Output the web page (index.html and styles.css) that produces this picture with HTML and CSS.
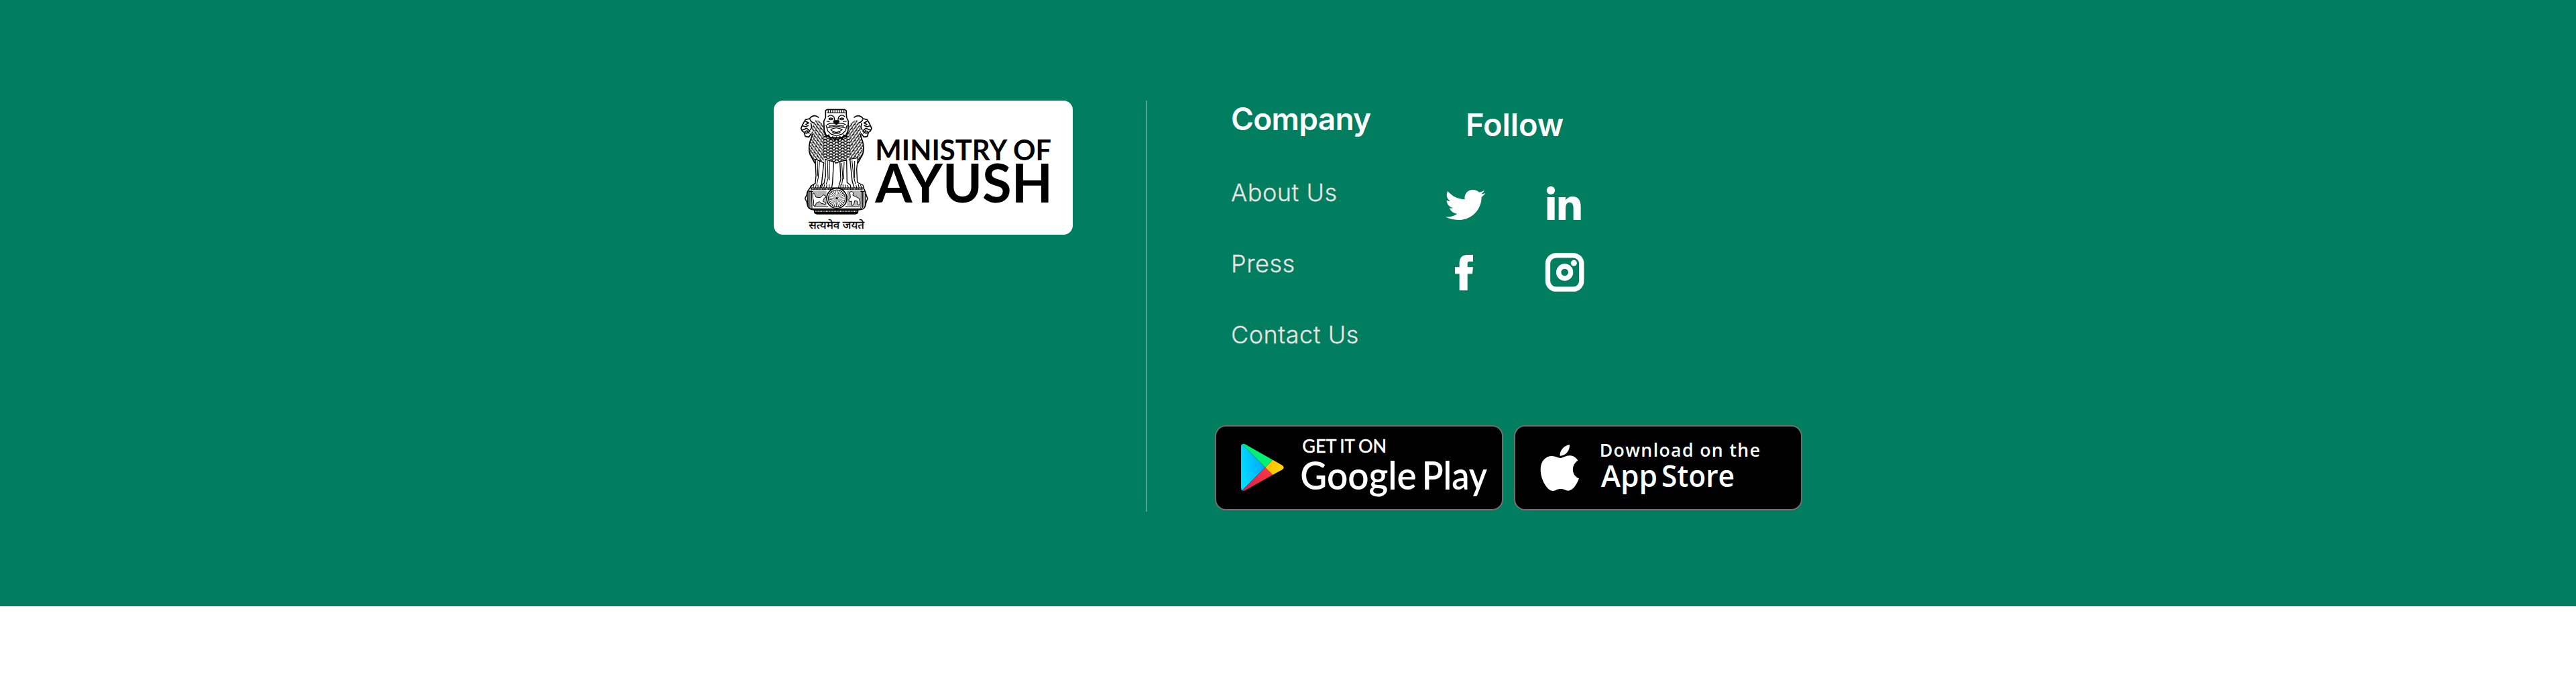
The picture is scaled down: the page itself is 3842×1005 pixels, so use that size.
FILE: index.html
```html
<!DOCTYPE html>
<html lang="en">
<head>
<meta charset="utf-8">
<title>Ministry of Ayush</title>
<link rel="stylesheet" href="styles.css">
</head>
<body>
<footer class="footer">
  <div class="footer-inner">
    <svg class="logo" viewBox="0 0 1338 600" role="img" aria-label="Ministry of Ayush">
      <defs>
        <pattern id="fur" width="26" height="13" patternUnits="userSpaceOnUse" patternTransform="translate(204 0)">
          <path d="M0 -10l13 12l13-12M0 3l13 12l13-12M6 1v6M20 1v6" fill="none" stroke="#000" stroke-width="4.200"/>
        </pattern>
        <pattern id="furLeft" width="17" height="14" patternUnits="userSpaceOnUse" patternTransform="rotate(14)">
          <path d="M0 3q8-1 16 8M1 11l5 3" fill="none" stroke="#000" stroke-width="4.200"/>
        </pattern>
        <pattern id="beads" width="7" height="10" patternUnits="userSpaceOnUse">
          <circle cx="3.500" cy="5" r="2.300" fill="#fff"/>
        </pattern>
        <g id="sideLion">
          <path d="M122 74q-24-16-42 6l-18 5l-10 17l-10 22l6 13l8 5l5 18l16 3l10-10l4 8l-8 26q-8 34 0 56l24 42l38-14l20-70l-12-92z" fill="#fff"/>
          <path d="M112 84q-20 24-20 60l-8 40q-8 32 0 56l24 42l38-14l20-70l-12-86z" fill="url(#furLeft)"/>
          <path d="M124 76q-24-18-42 5l-18 4l-10 17l-10 22l6 13l8 5l5 18l16 3l12-17M84 84q4 12 18 16M64 92l14 8l-14 8M52 113l12 4l14-6M50 132l20-8l14 12l-14 10l-14-3M60 139l14-5M70 135l12 12M88 100l4 18l-6 14M96 150l-12 34q-8 32 0 56l22 40" fill="none" stroke="#000" stroke-width="5" stroke-linejoin="round"/>
        </g>
      </defs>
      <g transform="translate(78 0)">
        <use href="#sideLion"/>
        <use href="#sideLion" transform="matrix(-1 0 0 1 404 0)"/>
        <path d="M146 150l-8 70l8 38l24 4l32 22l36-22l22-4l6-42l-8-72l-20-6h-74z" fill="#fff"/>
        <path d="M146 150l-8 70l8 38l24 4l32 22l36-22l22-4l6-42l-8-72l-20-6h-74z" fill="url(#fur)"/>
        <path d="M154 44l8-4h76l8 4l2 32l8 16l-2 44l-10 20l-22 10h-44l-22-12l-8-20l-2-42l8-16z" fill="#fff" stroke="#000" stroke-width="5"/>
        <path d="M160 54h82M166 42v12M176 42v12M186 42v12M196 42v12M206 42v12M216 42v12M226 42v12M236 42v12" stroke="#000" stroke-width="3.500"/>
        <path d="M164 72q14-14 28 2l3 16M240 72q-14-14-28 2l-3 16M168 82q9-8 19 0q-9 8-19 0M236 82q-9-8-19 0q9 8 19 0M158 92l14 2M248 92l-16 2M160 108q18-12 42-2q24-10 42 2M168 114q20-2 34 0q14-2 34 0M162 122q20-2 36-8M242 122q-20-2-36-8M156 110l8 26l14 14l24 8l26-8l14-14l8-26M176 130q26 24 52 0q-26-16-52 0M184 142q18 12 36 0" fill="none" stroke="#000" stroke-width="4"/>
        <path d="M190 88h24l3 9l-15 9l-15-9z"/>
        <path d="M150 140l6 22l12-8l8 18l10-10l8 16l8-14l8 16l8-18l10 10l8-18l10 8l6-22" fill="none" stroke="#000" stroke-width="5"/>
        <path d="M108 262l3 74l-3 34l-20 12l-4 10h44l8-18l10-96zM152 262l2 74l-7 34l-16 10l-2 12h52l4-24l5-94zM218 274l4 78l-8 28l-2 12h55l-2-14l-15-12l-2-102zM263 262l10 98l6 20l4 12h42l-4-14l-25-12l-3-60l6-50z" fill="#fff" stroke="#000" stroke-width="4" stroke-linejoin="round"/>
        <path d="M117 270l2 68M127 270l-6 75l-6 28M162 268l3 80l-8 26M171 268v88M226 280l5 66l-5 32M237 272l-3 80M272 268l8 74l8 32M284 270v76M92 378l-4 12M102 374l-4 16M112 375l-3 16M120 376v14M140 376l-4 15M150 374l-4 16M160 376l-3 14M170 374v16M222 376v14M232 374v16M242 376l2 14M252 378l4 12M290 378l3 12M300 374l4 16M310 376l5 14" fill="none" stroke="#000" stroke-width="3.200"/>
        <path d="M84 391h240l8 18l5 16l5 13l-6 15l-5 20q-5 14-24 15H98q-18-2-24-16l-5-20l-7-14l7-15l5-18z" fill="#fff" stroke="#000" stroke-width="4.500"/>
        <path d="M72 408l2 60M78 404v72M84 402v80M91 402l2 80M313 402l-1 80M320 404v76M326 406v70M332 416v50M80 406h74M252 406h76M102 474h64M242 474h64M88 483h230" stroke="#000" stroke-width="3.500"/>
        <path d="M98 404h60v66h-60zM250 404h60v66h-60z" fill="#b5b5b5"/>
        <path d="M96 412l9 6l6 14l20 2l12-12l9 2l4 8l-8 4l-6 14l14 8l-3 6l-18-4l-8-8l-14 6l-6 14l-8-4l2-18l-4-14zM262 410l10-4l6 6l-2 12l14 6l14 8l5 18l-3 12l-8-2l-2-16l-12-2l-4 18l-8 4l-2-20l-8 2l-5-8l8-10z" fill="#fff" stroke="#000" stroke-width="3" stroke-linejoin="round"/>
        <path d="M88 395h232" stroke="#000" stroke-width="8"/>
        <path d="M88 390h232v10H88z" fill="url(#beads)"/>
        <circle cx="204" cy="437" r="45" fill="#fff" stroke="#000" stroke-width="5"/>
        <circle cx="204" cy="437" r="38" fill="none" stroke="#000" stroke-width="3"/>
        <circle cx="204" cy="437" r="21" fill="none" stroke="#000" stroke-width="34" stroke-dasharray="1.500 4"/>
        <circle cx="204" cy="437" r="5"/>
        <path d="M100 488h202l-2 14q-2 6-12 7H118q-12 0-15-7z"/>
        <path d="M108 490h188v10H108z" fill="url(#beads)"/>
        <text class="logo-motto" x="79" y="573" textLength="248" lengthAdjust="spacingAndGlyphs">सत्यमेव जयते</text>
      </g>
      <text class="logo-ministry" x="454" y="266" textLength="591" lengthAdjust="spacingAndGlyphs">MINISTRY</text>
      <text class="logo-ministry" x="1071" y="266" textLength="171" lengthAdjust="spacingAndGlyphs">OF</text>
      <text class="logo-ayush" x="454" y="456" textLength="794" lengthAdjust="spacingAndGlyphs">AYUSH</text>
    </svg>

    <div class="divider"></div>

    <div class="content">
      <div class="columns">
        <nav class="company">
          <h2 class="heading">Company</h2>
          <a class="link">About Us</a>
          <a class="link">Press</a>
          <a class="link">Contact Us</a>
        </nav>
        <section class="follow">
          <h2 class="heading heading-follow">Follow</h2>
          <div class="social">
            <svg class="icon" viewBox="75 45 186 186" aria-label="Twitter"><path d="M88 75C107 98 134 111 164 112C160 87 178 69 200 69C211 69 221 73 228 80C237 79 245 75 251 71C249 79 244 84 237 88C244 88 250 86 256 84C252 91 246 96 239 101C239 156 197 204 136 204C114 204 94 199 78 190C98 192 116 187 130 176C113 175 101 165 96 151C102 152 107 152 112 150C94 146 83 132 83 116C88 118 93 120 99 120C83 109 79 91 88 75Z"/></svg>
            <svg class="icon" viewBox="519 45 186 186" aria-label="LinkedIn"><circle cx="549" cy="71.500" r="18.500"/><path d="M533 102h33v102h-33zM584 102h31v14q10-17 31-17q37 0 37 47v58h-33v-52q0-27-17-27q-18 0-18 27v52h-31z"/></svg>
            <svg class="icon" viewBox="75 348 186 186" aria-label="Facebook"><path d="M140 519V445H120V415H140V398Q140 360 176 360H201V390H184Q176 390 176 399V415H201L198 445H176V519Z"/></svg>
            <svg class="icon" viewBox="519 348 186 186" aria-label="Instagram"><rect class="ring" x="535.500" y="362.500" width="151" height="151" rx="37"/><circle class="ring" cx="611" cy="438" r="27"/><circle cx="652" cy="397" r="13.500"/></svg>
          </div>
        </section>
      </div>
      <div class="badges">
        <svg class="badge" viewBox="36 42 1290 381" role="img" aria-label="Get it on Google Play">
          <defs>
            <linearGradient id="gBlue" x1="1" y1="0.300" x2="0" y2="0.500"><stop offset="0" stop-color="#00a5ff"/><stop offset="1" stop-color="#00dcff"/></linearGradient>
            <linearGradient id="gRed" x1="1" y1="0" x2="0" y2="1"><stop offset="0" stop-color="#ff3a44"/><stop offset="1" stop-color="#d0214f"/></linearGradient>
            <linearGradient id="gYellow" x1="1" x2="0"><stop offset="0" stop-color="#ffd800"/><stop offset="1" stop-color="#ffbc00"/></linearGradient>
          </defs>
          <rect class="badge-box" x="39" y="45" width="1284" height="375" rx="46"/>
          <path d="M158 127Q153 129 153 138V323Q153 331 158 334L261 231Z" fill="url(#gBlue)"/>
          <path d="M158 127Q164 123 173 128L295 197L261 231Z" fill="#00f076"/>
          <path d="M158 334Q164 338 173 333L295 264L261 231Z" fill="url(#gRed)"/>
          <path d="M295 197L337 221Q351 231 337 241L295 264L261 231Z" fill="url(#gYellow)"/>
          <text class="google-small" x="427" y="165" textLength="153" lengthAdjust="spacingAndGlyphs">GET</text>
          <text class="google-small" x="595" y="165" textLength="68" lengthAdjust="spacingAndGlyphs">IT</text>
          <text class="google-small" x="678" y="165" textLength="126" lengthAdjust="spacingAndGlyphs">ON</text>
          <text class="google-big" x="418" y="331" textLength="520" lengthAdjust="spacingAndGlyphs">Google</text>
          <text class="google-big" x="962" y="331" textLength="292" lengthAdjust="spacingAndGlyphs">Play</text>
        </svg>
        <svg class="badge" viewBox="54 42 1290 381" role="img" aria-label="Download on the App Store">
          <rect class="badge-box" x="57" y="45" width="1284" height="375" rx="46"/>
          <path fill="#fff" d="M303 129C305 157 284 180 260 179C258 155 279 132 303 129ZM340 200C309 219 310 266 345 280C337 304 318 335 298 335C284 335 279 327 263 327C247 327 242 335 228 336C204 336 173 287 173 240C173 202 197 180 224 180C240 180 251 189 262 189C273 189 285 178 303 178C318 178 332 186 340 200Z"/>
          <text class="apple-small" x="437" y="183" textLength="718" lengthAdjust="spacing">Download on the</text>
          <text class="apple-big" x="443" y="317" textLength="253" lengthAdjust="spacingAndGlyphs">App</text>
          <text class="apple-big" x="714" y="317" textLength="327" lengthAdjust="spacingAndGlyphs">Store</text>
        </svg>
      </div>
    </div>
  </div>
</footer>
</body>
</html>
```
FILE: styles.css
```css
body {
  margin: 0;
  background: #fff;
  font-family: Inter, "Liberation Sans", sans-serif;
}

.footer {
  box-sizing: border-box;
  height: 904px;
  padding-top: 150px;
  background: #007e5f;
}

.footer-inner {
  display: flex;
  width: 1534px;
  margin: 0 auto;
}

.logo {
  flex: none;
  width: 446px;
  height: 200px;
  border-radius: 14px;
  background: #fff;
}

.logo-ministry,
.logo-ayush {
  font-family: Lato, sans-serif;
  font-weight: 700;
}

.logo-ministry {
  font-size: 124px;
}

.logo-ayush {
  font-size: 242px;
}

.logo-motto {
  font-family: "Noto Sans Devanagari", "Noto Sans", sans-serif;
  font-size: 50px;
  stroke: #000;
  stroke-width: 1px;
}

.divider {
  width: 2px;
  height: 613px;
  margin: 0 101px 0 109px;
  background: #4da58f;
}

.content {
  display: flex;
  flex-direction: column;
  justify-content: space-between;
  width: 876px;
  height: 611px;
}

.columns {
  display: flex;
  padding-left: 24px;
}

.company {
  display: flex;
  flex-direction: column;
  width: 319px;
  padding-top: 1px;
}

.heading {
  margin: 0 0 62px;
  color: #fff;
  font-size: 46px;
  font-weight: 600;
  line-height: 52px;
  letter-spacing: -0.7px;
}

.heading-follow {
  margin: 0 2px 63px 0;
  font-size: 47px;
  letter-spacing: -0.1px;
}

.link {
  margin-bottom: 62px;
  color: #e5e5e5;
  font-size: 36px;
  font-weight: 300;
  line-height: 44px;
  letter-spacing: 0.53px;
  -webkit-text-stroke: 0.3px #e5e5e5;
}

.follow {
  width: 210px;
  padding-top: 10px;
  text-align: center;
}

.social {
  display: grid;
  grid-template-columns: 62px 62px;
  gap: 39px 86px;
}

.icon {
  width: 62px;
  height: 62px;
  fill: #fff;
}

.ring {
  fill: none;
  stroke: #fff;
  stroke-width: 22px;
}

.badges {
  display: flex;
  gap: 16px;
}

.badge {
  width: 430px;
  height: 127px;
}

.badge-box {
  fill: #000;
  stroke: #706f6f;
  stroke-width: 6px;
}

.google-small,
.google-big {
  fill: #fff;
  font-family: Lato, sans-serif;
}

.google-small {
  font-size: 79px;
  stroke: #fff;
  stroke-width: 1.5px;
}

.google-big {
  font-size: 171px;
  font-weight: 600;
}

.apple-small,
.apple-big {
  fill: #fff;
  font-family: "Open Sans", "Noto Sans", sans-serif;
  font-weight: 600;
}

.apple-small {
  font-size: 80px;
}

.apple-big {
  font-size: 136px;
}
```
